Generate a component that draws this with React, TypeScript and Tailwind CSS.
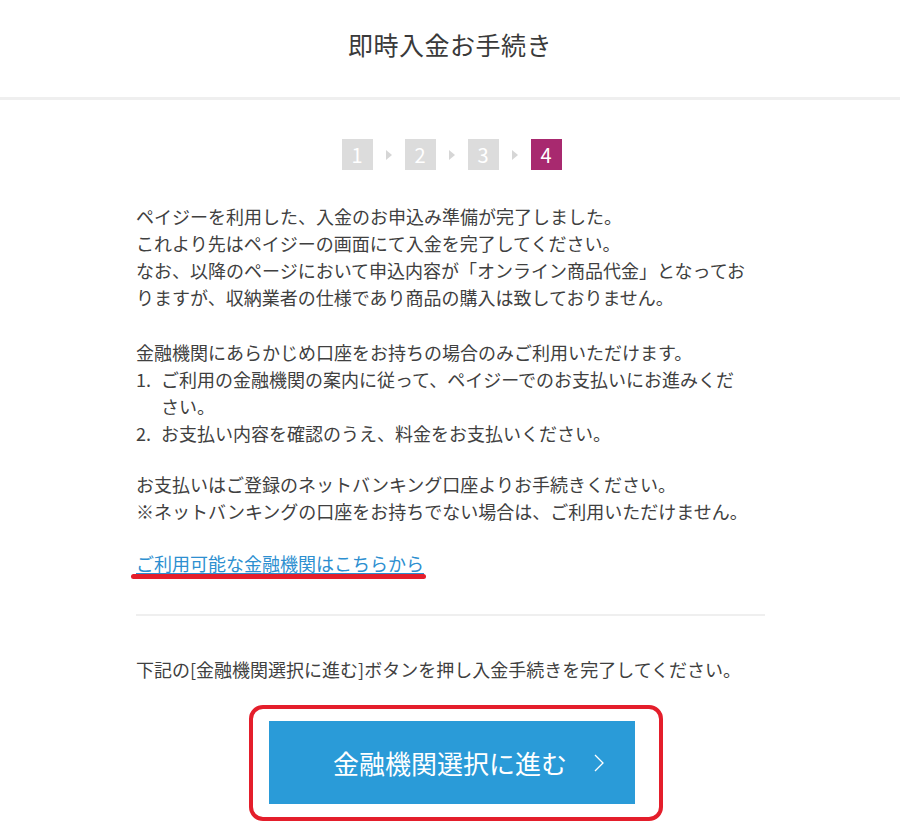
import React from "react";

const font = { fontFamily: '"Noto Sans CJK JP", "Noto Sans", sans-serif' };

function StepBox({ n, active }: { n: number; active?: boolean }) {
  return (
    <div
      className={
        "flex h-[31px] w-[31px] items-center justify-center text-[20px] leading-none text-white " +
        (active ? "bg-[#a8296f]" : "bg-[#dcdcdc]")
      }
    >
      {n}
    </div>
  );
}

function StepArrow() {
  return (
    <svg width="6" height="10" viewBox="0 0 6 10" className="mx-[13px]">
      <polygon points="0,0 6,5 0,10" fill="#d6d6d6" />
    </svg>
  );
}

export default function App() {
  return (
    <div className="min-h-[838px] w-full bg-white text-[#404040]" style={font}>
      <header className="flex h-[100px] items-center justify-center border-b-[3px] border-[#efefef] pb-[8px]">
        <h1 className="text-[25px] font-normal tracking-[0.5px] text-[#3a3a3a]">即時入金お手続き</h1>
      </header>

      <main className="mx-auto w-[630px] pl-[1px]">
        <div className="mt-[39px] flex items-center justify-center pl-[2px]">
          <StepBox n={1} />
          <StepArrow />
          <StepBox n={2} />
          <StepArrow />
          <StepBox n={3} />
          <StepArrow />
          <StepBox n={4} active />
        </div>

        <div className="mt-[33px] whitespace-nowrap text-[18px] leading-[27px]">
          <p>
            ペイジーを利用した、入金のお申込み準備が完了しました。
            <br />
            これより先はペイジーの画面にて入金を完了してください。
            <br />
            なお、以降のページにおいて申込内容が「オンライン商品代金」となってお
            <br />
            りますが、収納業者の仕様であり商品の購入は致しておりません。
          </p>

          <p className="mt-[28px]">金融機関にあらかじめ口座をお持ちの場合のみご利用いただけます。</p>
          <ol>
            <li className="flex">
              <span className="w-[25px] shrink-0">1.</span>
              <span>
                ご利用の金融機関の案内に従って、ペイジーでのお支払いにお進みくだ
                <br />
                さい。
              </span>
            </li>
            <li className="flex">
              <span className="w-[25px] shrink-0">2.</span>
              <span>お支払い内容を確認のうえ、料金をお支払いください。</span>
            </li>
          </ol>

          <p className="mt-[24px]">
            お支払いはご登録のネットバンキング口座よりお手続きください。
            <br />
            ※ネットバンキングの口座をお持ちでない場合は、ご利用いただけません。
          </p>

          <div className="relative mt-[25px] inline-block">
            <a href="#" className="text-[#2d8fd0] underline decoration-[#2d8fd0] decoration-1 underline-offset-[2px]">
              ご利用可能な金融機関はこちらから
            </a>
            <span className="absolute left-[-5px] right-[-2px] top-[24px] h-[5px] rounded-full bg-[#e41e2b]" />
          </div>
        </div>

        <div className="mt-[37px] h-[2px] bg-[#efefef]" />

        <p className="mt-[40px] whitespace-nowrap text-[18px] leading-[27px]">
          下記の[金融機関選択に進む]ボタンを押し入金手続きを完了してください。
        </p>

        <div className="mt-[22px] flex justify-center pl-[10px]">
          <div className="rounded-[14px] border-[4px] border-[#e41e2b] pb-[13px] pl-[16px] pr-[24px] pt-[12px]">
            <button className="flex h-[83px] w-[366px] items-center justify-center bg-[#2a9bd8] pl-[34px] text-white">
              <span className="text-[26px]">金融機関選択に進む</span>
              <svg width="10" height="18" viewBox="0 0 10 18" className="ml-[27px]">
                <polyline points="1,1 9,9 1,17" fill="none" stroke="white" strokeWidth="1.3" />
              </svg>
            </button>
          </div>
        </div>
      </main>
    </div>
  );
}
